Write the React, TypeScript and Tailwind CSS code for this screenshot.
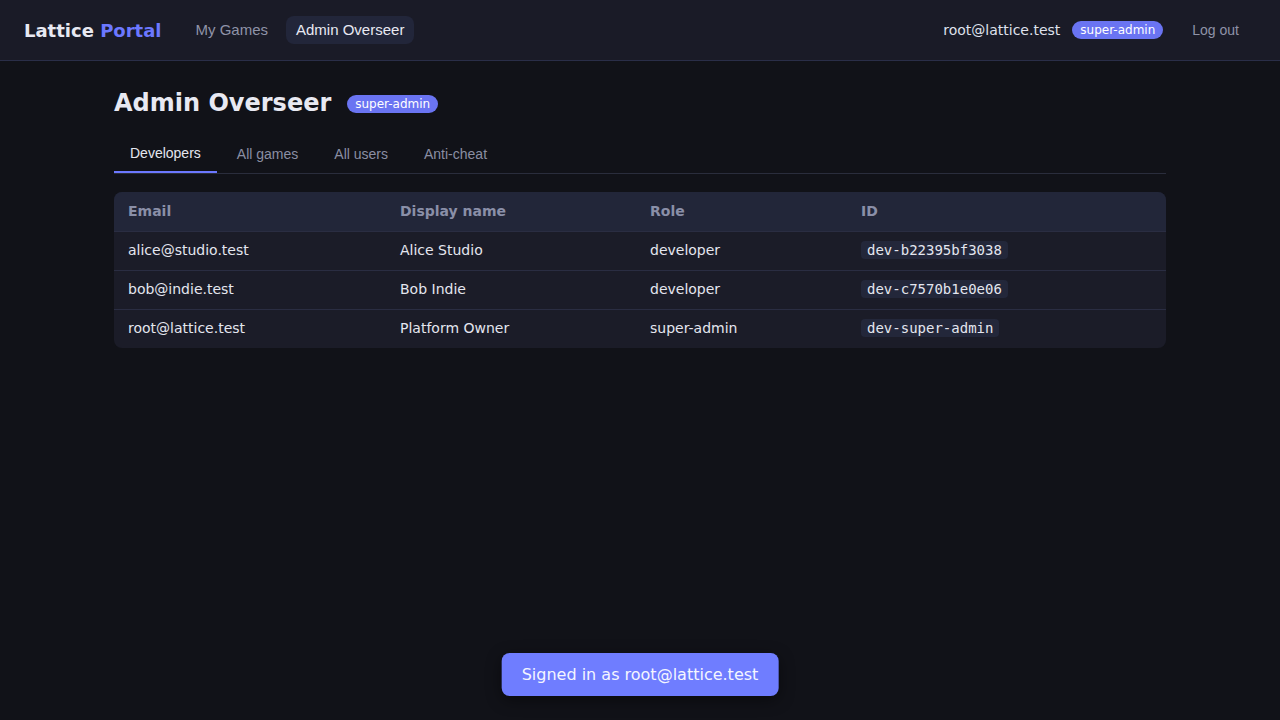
import React from "react";

const rows = [
  { email: "alice@studio.test", name: "Alice Studio", role: "developer", id: "dev-b22395bf3038" },
  { email: "bob@indie.test", name: "Bob Indie", role: "developer", id: "dev-c7570b1e0e06" },
  { email: "root@lattice.test", name: "Platform Owner", role: "super-admin", id: "dev-super-admin" },
];

export default function App() {
  return (
    <div className="min-h-[720px] bg-[#111218] text-[#e4e6ef] font-['DejaVu_Sans',sans-serif] relative">
      <header className="h-[61px] bg-[#1a1b27] border-b border-[#2a2e48] flex items-center justify-between pl-6 pr-[25px]">
        <div className="flex items-center">
          <div className="text-[18px] font-bold text-[#e8e9f2] mr-[24px]">
            Lattice <span className="text-[#6c78ff]">Portal</span>
          </div>
          <button className="font-['Liberation_Sans',sans-serif] text-[15px] text-[#8f93a8] px-[10px] h-[28px] rounded-lg">My Games</button>
          <button className="font-['Liberation_Sans',sans-serif] text-[15px] text-[#e8e9f2] bg-[#22263a] px-[10px] h-[28px] rounded-lg ml-2">Admin Overseer</button>
        </div>
        <div className="flex items-center">
          <span className="text-[14px] text-[#dfe1ec]">root@lattice.test</span>
          <span className="ml-3 text-[12px] leading-[18px] px-2 rounded-full bg-[#6a74f2] text-white">super-admin</span>
          <button className="ml-[13px] font-['Liberation_Sans',sans-serif] text-[14px] text-[#8f93a8] px-4 h-[28px]">Log out</button>
        </div>
      </header>

      <main className="max-w-[1100px] mx-auto px-6">
        <div className="flex items-center mt-[26px] h-[32px]">
          <h1 className="text-[24px] font-bold text-[#e8e9f2]">Admin Overseer</h1>
          <span className="ml-4 mt-[1px] text-[12px] leading-[18px] px-2 rounded-full bg-[#6a74f2] text-white">super-admin</span>
        </div>

        <div className="flex gap-1 mt-[16px] border-b border-[#2a2d3c] font-['Liberation_Sans',sans-serif] text-[14px]">
          <div className="px-4 h-[38px] flex items-center text-[#e4e6ef] border-b-2 border-[#6c78ff] -mb-px">Developers</div>
          <div className="px-4 h-[38px] flex items-center text-[#8a8ea3]">All games</div>
          <div className="px-4 h-[38px] flex items-center text-[#8a8ea3]">All users</div>
          <div className="px-4 h-[38px] flex items-center text-[#8a8ea3]">Anti-cheat</div>
        </div>

        <div className="mt-[18px] rounded-lg overflow-hidden bg-[#1b1c28]">
          <table className="w-full text-[14px] border-collapse">
            <thead>
              <tr className="bg-[#222639] h-[39px]">
                <th className="text-left font-bold text-[#8a8fa8] px-[14px] w-[272px]">Email</th>
                <th className="text-left font-bold text-[#8a8fa8] px-[14px] w-[250px]">Display name</th>
                <th className="text-left font-bold text-[#8a8fa8] px-[14px] w-[211px]">Role</th>
                <th className="text-left font-bold text-[#8a8fa8] px-[14px]">ID</th>
              </tr>
            </thead>
            <tbody>
              {rows.map((r) => (
                <tr key={r.id} className="h-[39px] border-t border-[#2a2d42]">
                  <td className="px-[14px] text-[#e4e6ef]">{r.email}</td>
                  <td className="px-[14px] text-[#e4e6ef]">{r.name}</td>
                  <td className="px-[14px] text-[#e4e6ef]">{r.role}</td>
                  <td className="px-[14px]">
                    <code className="font-['DejaVu_Sans_Mono',monospace] text-[14px] bg-[#23273a] text-[#e4e6ef] px-[6px] py-[1px] rounded">{r.id}</code>
                  </td>
                </tr>
              ))}
            </tbody>
          </table>
        </div>
      </main>

      <div className="absolute left-1/2 -translate-x-1/2 bottom-[24px] bg-[#6f7dff] text-[#f4f5ff] text-[16px] px-5 h-[43px] flex items-center rounded-lg shadow-[0_4px_16px_rgba(0,0,0,0.45)]">
        Signed in as root@lattice.test
      </div>
    </div>
  );
}
